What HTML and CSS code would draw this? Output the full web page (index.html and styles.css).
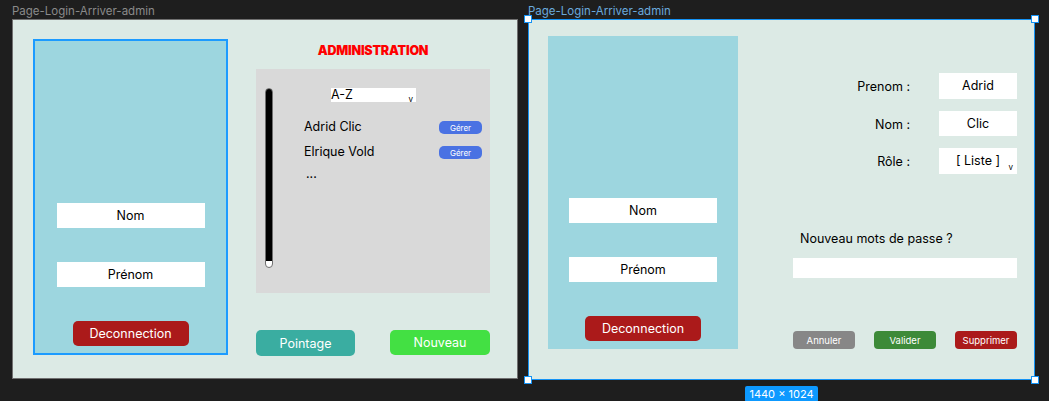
FILE: index.html
```html
<!DOCTYPE html>
<html lang="fr">
<head>
<meta charset="utf-8">
<title>Page-Login-Arriver-admin</title>
<link rel="stylesheet" href="styles.css">
</head>
<body>
<div class="canvas">
  <div class="artboard">
    <div class="frame-label">Page-Login-Arriver-admin</div>
    <div class="frame frame-a">
      <div class="sidebar sidebar-outlined">
        <div class="field">Nom</div>
        <div class="field">Prénom</div>
        <div class="btn btn-logout">Deconnection</div>
      </div>
      <div class="admin-col">
        <div class="admin-title">ADMINISTRATION</div>
        <div class="panel">
          <div class="scrollbar"></div>
          <div class="panel-content">
            <div class="select">A-Z<span class="chev">v</span></div>
            <div class="user-row"><span>Adrid Clic</span><span class="btn-manage">Gérer</span></div>
            <div class="user-row"><span>Elrique Vold</span><span class="btn-manage">Gérer</span></div>
            <div class="more">...</div>
          </div>
        </div>
        <div class="actions-a">
          <div class="btn btn-pointage">Pointage</div>
          <div class="btn btn-new">Nouveau</div>
        </div>
      </div>
    </div>
  </div>

  <div class="artboard">
    <div class="frame-label selected-label">Page-Login-Arriver-admin</div>
    <div class="frame frame-b">
      <span class="handle h-tl"></span>
      <span class="handle h-tr"></span>
      <span class="handle h-bl"></span>
      <span class="handle h-br"></span>
      <div class="sidebar sidebar-b">
        <div class="field">Nom</div>
        <div class="field">Prénom</div>
        <div class="btn btn-logout">Deconnection</div>
      </div>
      <div class="edit-col">
        <div class="form-grid">
          <div class="form-label">Prenom :</div>
          <div class="input">Adrid</div>
          <div class="form-label">Nom :</div>
          <div class="input">Clic</div>
          <div class="form-label">Rôle :</div>
          <div class="input input-select">[ Liste ]<span class="chev">v</span></div>
        </div>
        <div class="pw-question">Nouveau mots de passe ?</div>
        <div class="pw-input"></div>
        <div class="actions-b">
          <div class="btn-sm btn-cancel">Annuler</div>
          <div class="btn-sm btn-ok">Valider</div>
          <div class="btn-sm btn-delete">Supprimer</div>
        </div>
      </div>
    </div>
    <div class="size-badge">1440 × 1024</div>
  </div>
</div>
</body>
</html>
```

FILE: styles.css
```css
* { box-sizing: border-box; }

html, body {
  margin: 0;
  height: 100%;
}

body {
  background: #1e1e1e;
  overflow: hidden;
  font-family: Inter, "Noto Sans", "Liberation Sans", sans-serif;
  color: #000;
}

.canvas {
  display: flex;
  gap: 10px;
  padding: 3px 0 0 12px;
}

.artboard {
  display: flex;
  flex-direction: column;
}

.frame-label {
  font-size: 11.5px;
  line-height: 16px;
  height: 16px;
  color: #8a8a8a;
  white-space: nowrap;
}

.selected-label { color: #6aa9dc; }

.frame {
  position: relative;
  display: flex;
  align-items: flex-start;
  background: #dceae5;
  border: 1px solid #707070;
}

/* ---------- Frame A ---------- */
.frame-a {
  width: 506px;
  height: 360px;
  padding: 19px 0 0 20px;
}

.sidebar {
  display: flex;
  flex-direction: column;
  align-items: center;
  justify-content: flex-end;
  gap: 34px;
  background: #9dd6df;
}

.sidebar-outlined {
  width: 195px;
  height: 316px;
  border: 2px solid #1c9bff;
  padding-bottom: 7px;
}

.field {
  width: 148px;
  height: 25px;
  background: #fff;
  display: flex;
  align-items: center;
  justify-content: center;
  font-size: 12.5px;
}

.btn {
  display: flex;
  align-items: center;
  justify-content: center;
  color: #fff;
  font-size: 12.5px;
  border-radius: 5px;
}

.btn-logout {
  width: 116px;
  height: 25px;
  background: #ab1a1a;
}

.admin-col {
  margin-left: 28px;
  width: 234px;
  height: 317px;
  display: flex;
  flex-direction: column;
}

.admin-title {
  margin-top: 4px;
  line-height: 16px;
  text-align: center;
  color: #ff0000;
  font-size: 12.5px;
  font-weight: 900;
  letter-spacing: -0.2px;
}

.panel {
  margin-top: 10px;
  height: 224px;
  background: #d9d9d9;
  display: flex;
  align-items: flex-start;
  padding: 19px 8px 0 9px;
}

.scrollbar {
  width: 8px;
  height: 180px;
  border: 1px solid #707070;
  border-radius: 4px;
  background: linear-gradient(to bottom, #000 0, #000 172px, #fff 172px);
}

.panel-content {
  flex: 1;
  padding-left: 31px;
  font-size: 12.5px;
}

.select {
  position: relative;
  margin-left: 27px;
  width: 85px;
  height: 14px;
  line-height: 14px;
  background: #fff;
}

.chev {
  position: absolute;
  right: 3px;
  bottom: -1px;
  font-size: 8px;
  line-height: 8px;
}

.user-row {
  height: 25px;
  display: flex;
  align-items: center;
  justify-content: space-between;
}

.select + .user-row { margin-top: 12px; }

.btn-manage {
  width: 43px;
  height: 13px;
  border-radius: 5px;
  background: #4a72e3;
  color: #fff;
  font-size: 8px;
  display: flex;
  align-items: center;
  justify-content: center;
  transform: translateY(1px);
}

.more {
  margin-top: 2px;
  line-height: 16px;
  padding-left: 2px;
}

.actions-a {
  margin-top: auto;
  display: flex;
  justify-content: space-between;
  align-items: flex-start;
}

.btn-pointage {
  width: 99px;
  height: 26px;
  background: #3aada1;
}

.btn-new {
  width: 100px;
  height: 25px;
  background: #43e043;
}

/* ---------- Frame B ---------- */
.frame-b {
  width: 507px;
  height: 361px;
  border-color: #1593f5;
  padding: 16px 0 0 19px;
}

.handle {
  position: absolute;
  width: 8px;
  height: 8px;
  background: #fff;
  border: 1px solid #1593f5;
  z-index: 2;
}
.h-tl { left: -5px; top: -5px; }
.h-tr { right: -5px; top: -5px; }
.h-bl { left: -5px; bottom: -5px; }
.h-br { right: -5px; bottom: -5px; }

.sidebar-b {
  width: 190px;
  height: 313px;
  padding-bottom: 8px;
}

.edit-col {
  margin-left: 55px;
  width: 224px;
  height: 313px;
  display: flex;
  flex-direction: column;
  font-size: 12.5px;
}

.form-grid {
  margin-top: 37px;
  display: grid;
  grid-template-columns: 1fr 78px;
  grid-auto-rows: 25.5px;
  column-gap: 28px;
  row-gap: 12px;
}

.form-label {
  justify-self: end;
  align-self: center;
  padding-right: 1px;
  transform: translateY(1px);
}

.input {
  position: relative;
  background: #fff;
  display: flex;
  align-items: center;
  justify-content: center;
}

.input-select .chev {
  right: 4px;
  bottom: 3px;
}

.pw-question {
  margin-top: 57px;
  padding-left: 7px;
  line-height: 16px;
}

.pw-input {
  margin-top: 11px;
  height: 20px;
  background: #fff;
}

.actions-b {
  margin-top: auto;
  display: flex;
  justify-content: space-between;
}

.btn-sm {
  width: 62px;
  height: 18px;
  border-radius: 4px;
  color: #fff;
  font-size: 9.5px;
  display: flex;
  align-items: center;
  justify-content: center;
}

.btn-cancel { background: #878787; }
.btn-ok { background: #3d8a38; }
.btn-delete { background: #ab1a1a; }

.size-badge {
  align-self: center;
  margin-top: 6px;
  background: #0d99ff;
  color: #fff;
  font-size: 11px;
  line-height: 16px;
  padding: 0 4px;
  border-radius: 2px;
  white-space: nowrap;
}
```
